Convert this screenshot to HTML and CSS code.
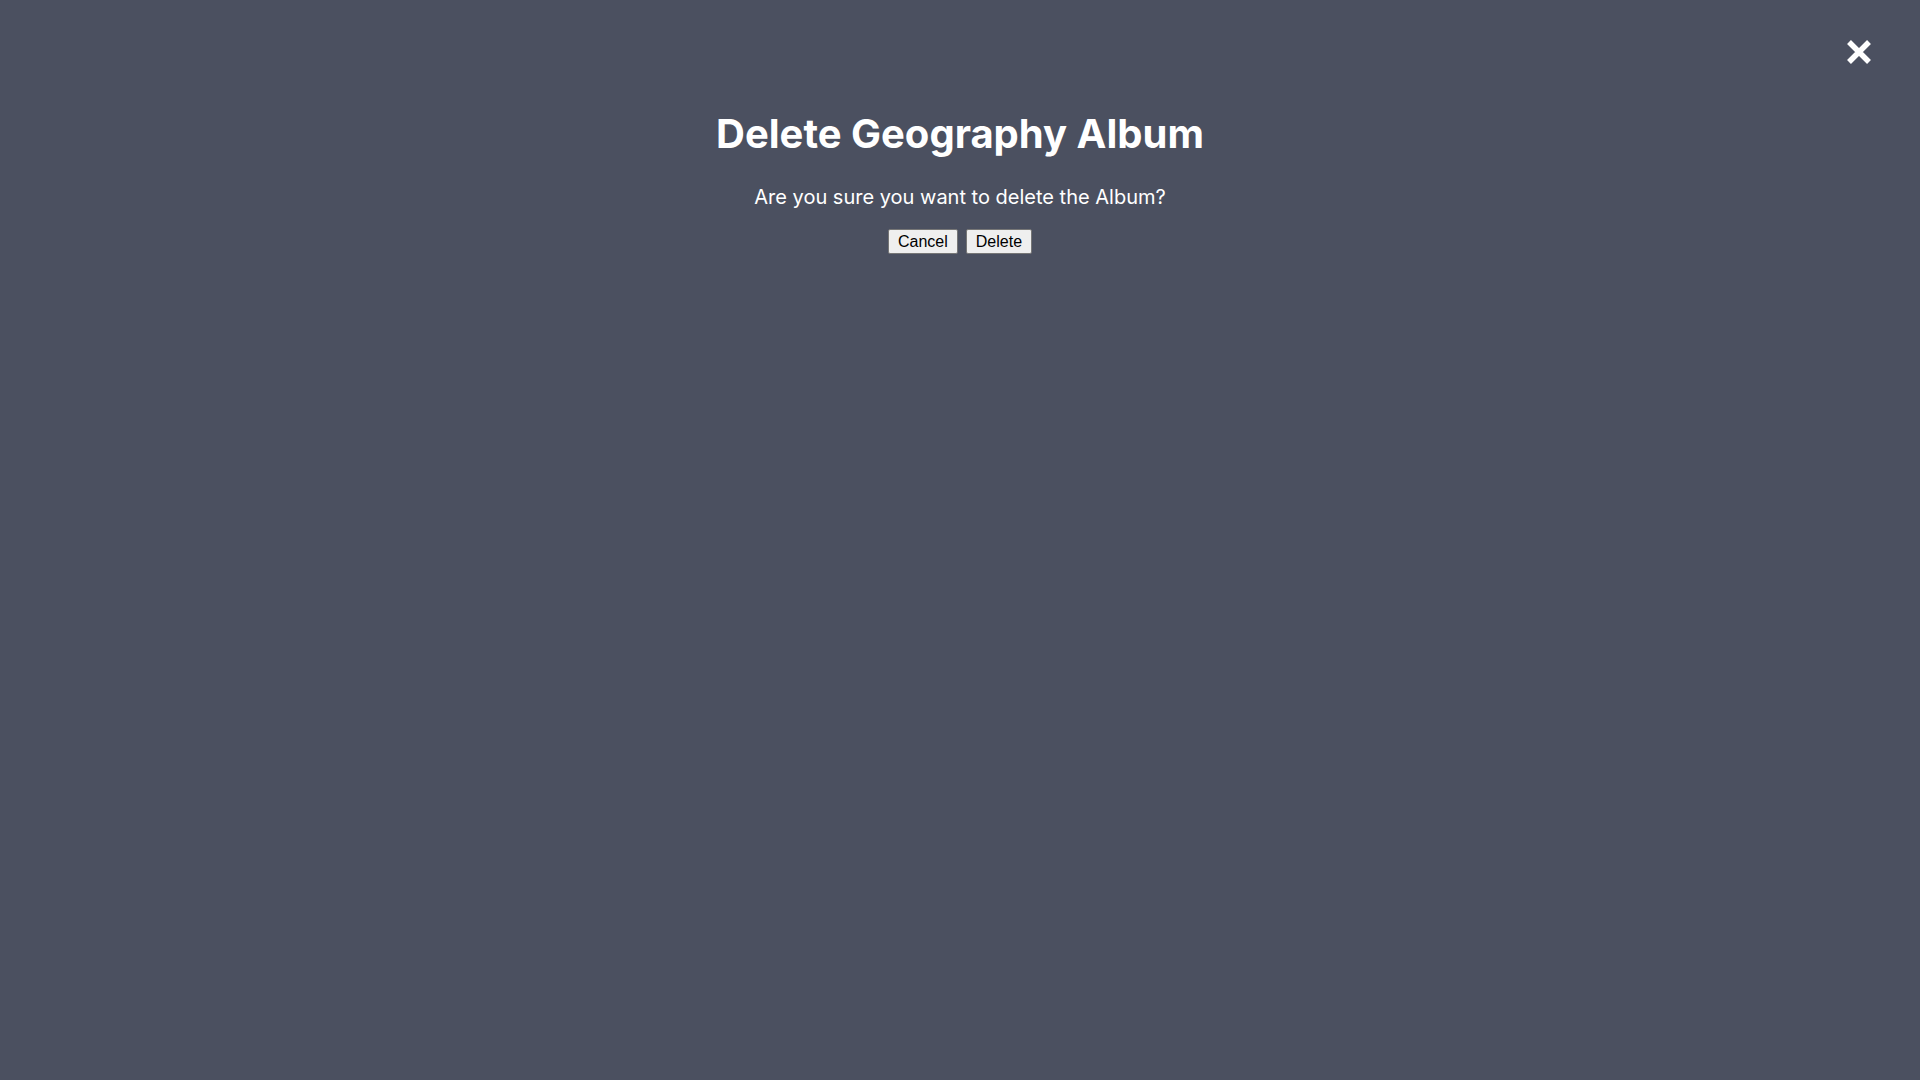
FILE: index.html
```html
<!DOCTYPE html>
<html lang="en">
<head>
<meta charset="utf-8">
<title>Delete Geography Album</title>
<link rel="stylesheet" href="styles.css">
</head>
<body>
<div class="modal">
  <button class="close" aria-label="Close">
    <svg width="26" height="26" viewBox="0 0 26 26" aria-hidden="true">
      <path d="M3 3 L23 23 M23 3 L3 23" stroke="#ffffff" stroke-width="5.5" stroke-linecap="butt" fill="none"/>
    </svg>
  </button>
  <div class="content">
    <h1 class="title">Delete Geography Album</h1>
    <p class="message">Are you sure you want to delete the Album?</p>
    <div class="actions">
      <button class="btn">Cancel</button>
      <button class="btn">Delete</button>
    </div>
  </div>
</div>
</body>
</html>
```
FILE: styles.css
```css
html, body {
  margin: 0;
  padding: 0;
  height: 100%;
}
body {
  background: #4b5060;
  font-family: Inter, "Noto Sans", sans-serif;
  color: #ffffff;
}
.modal {
  position: relative;
  min-height: 100vh;
}
.close {
  position: absolute;
  top: 39px;
  right: 48px;
  width: 26px;
  height: 26px;
  padding: 0;
  border: 0;
  background: transparent;
  display: block;
  cursor: pointer;
}
.close svg {
  display: block;
}
.content {
  display: flex;
  flex-direction: column;
  align-items: center;
  padding-top: 114px;
}
.title {
  margin: 0;
  font-size: 40px;
  line-height: 40px;
  font-weight: 700;
}
.message {
  margin: 29px 0 0;
  font-size: 20px;
  line-height: 28px;
}
.actions {
  display: flex;
  gap: 8px;
  margin-top: 18px;
}
.btn {
  font-family: "Liberation Sans", Arial, sans-serif;
  font-size: 16px;
  line-height: 19px;
  padding: 2px 9px;
  color: #000000;
  background: #efefef;
  border: 1px solid #767676;
  border-radius: 2px;
}
```
